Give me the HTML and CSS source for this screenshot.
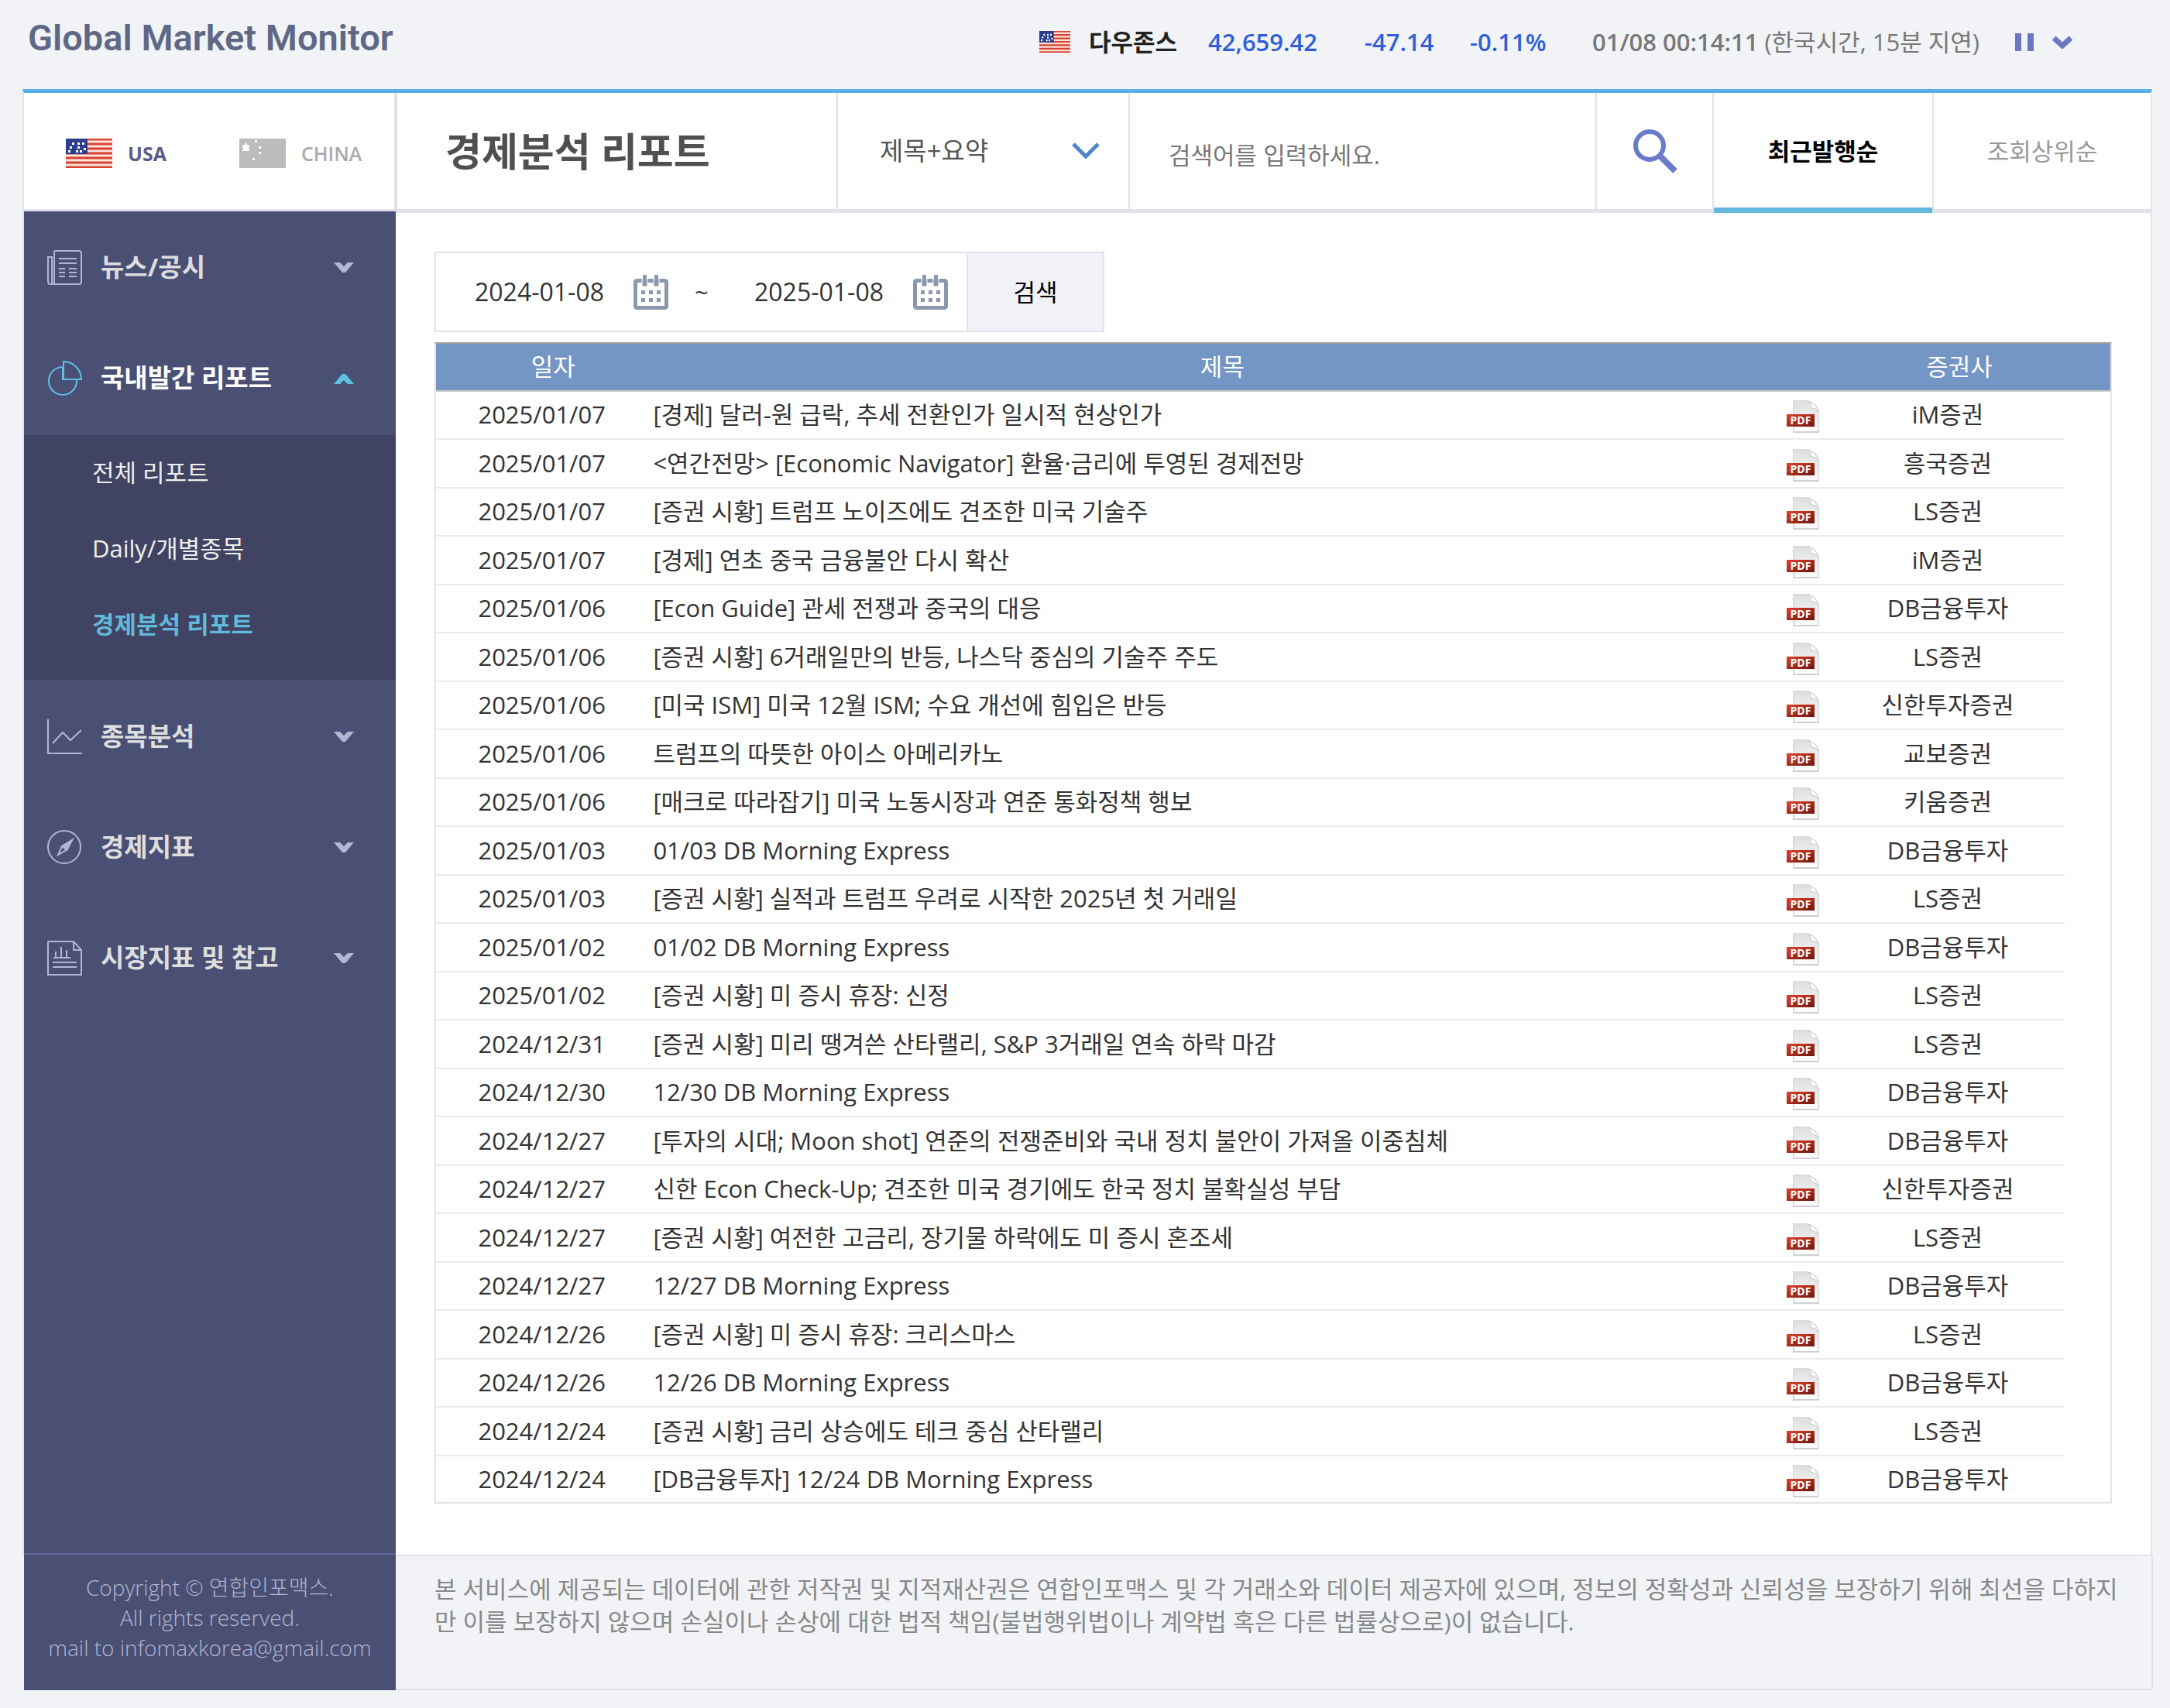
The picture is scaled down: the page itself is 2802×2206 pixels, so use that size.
FILE: index.html
```html
<!DOCTYPE html>
<html lang="ko">
<head>
    <meta charset="UTF-8">
    <meta name="viewport" content="width=device-width, initial-scale=1.0">
    <title>Global Market Monitor</title>
    <link rel="stylesheet" href="styles.css">
</head>
<body>

    <!-- 공통 아이콘 -->
    <svg class="defs" width="0" height="0" aria-hidden="true">
        <linearGradient id="paper" x1="0" y1="0" x2="0" y2="1">
            <stop offset="0" stop-color="#dedede"/>
            <stop offset="1" stop-color="#ffffff"/>
        </linearGradient>
        <linearGradient id="red" x1="0" y1="0" x2="1" y2="1">
            <stop offset="0" stop-color="#e2402a"/>
            <stop offset="1" stop-color="#6e1610"/>
        </linearGradient>
        <symbol id="pdf" viewBox="0 0 42 42">
            <path d="M9 1h18q12 4 14 14v26H9z" fill="url(#paper)" stroke="#dcdcdc" stroke-width="2"/>
            <path d="M8 41h33" stroke="#cfcfcf" stroke-width="2"/>
            <path d="M28 1q4 3 3 9 6-1 10 5-2-10-13-14z" fill="#fff" stroke="#c8c8c8"/>
            <rect x="0" y="18" width="36" height="16" fill="url(#red)"/>
        </symbol>
        <symbol id="down" viewBox="0 0 26 14">
            <path d="M0 0h8l5 5 5-5h8L15 13h-4z" fill="currentColor"/>
        </symbol>
        <symbol id="calendar" viewBox="0 0 45 45">
            <path d="M5 5h35q5 0 5 5v30q0 5-5 5H5q-5 0-5-5V10q0-5 5-5zM5 10v30h35V10z" fill="#8b97ad" fill-rule="evenodd"/>
            <path d="M11 5h7v10h-7zM26 5h7v10h-7z" fill="#8b97ad" stroke="#fff"/>
            <path d="M12 0h5v14h-5zM27 0h5v14h-5zM10 20h5v5h-5zM20 20h5v5h-5zM30 20h5v5h-5zM10 30h5v5h-5zM20 30h5v5h-5zM30 30h5v5h-5z" fill="#8b97ad"/>
        </symbol>
        <symbol id="flag-us" viewBox="0 0 60 38" preserveAspectRatio="none">
            <rect width="60" height="38" fill="#fbe3df"/>
            <path d="M0 1h60M0 7h60M0 13h60M0 19h60M0 25h60M0 31h60M0 37h60" stroke="#d8432f" stroke-width="3"/>
            <rect width="28" height="20" fill="#2c3f8f"/>
            <path d="M8 5h3v3H8zM15 5h3v3h-3zM21 5h3v3h-3zM5 10h3v3H5zM15 10h3v3h-3zM3 15h3v3H3zM13 15h3v3h-3zM18 15h3v3h-3zM23 12h3v3h-3z" fill="#fff"/>
        </symbol>
    </svg>

    <header class="top">
        <h1 class="logo">Global Market Monitor</h1>
        <div class="ticker">
            <svg class="ticker-flag" width="40" height="28"><use href="#flag-us"/></svg>
            <strong class="index-name">다우존스</strong>
            <strong class="value price">42,659.42</strong>
            <strong class="value diff">-47.14</strong>
            <strong class="value rate">-0.11%</strong>
            <span class="time"><b>01/08 00:14:11</b> (한국시간, 15분 지연)</span>
            <button class="icon-btn pause" aria-label="일시정지">
                <svg width="24" height="23"><path d="M0 0h8v23H0zM16 0h8v23h-8z" fill="#6b77c4"/></svg>
            </button>
            <button class="icon-btn more" aria-label="더보기">
                <svg width="26" height="17" viewBox="0 0 26 17"><path d="M2 3l11 10L24 3" fill="none" stroke="#6b77c4" stroke-width="7"/></svg>
            </button>
        </div>
    </header>

    <div class="wrap">
        <aside class="side">
            <div class="country">
                <a href="#" class="on"><svg width="60" height="38"><use href="#flag-us"/></svg>USA</a>
                <a href="#">
                    <svg width="60" height="38"><rect width="60" height="38" fill="#bcbcbc"/><path d="M8 4l2 4 4 1-2 3 1 4H4l1-4-2-3 4-1zM20 2h3v3h-3zM25 10h3v3h-3zM25 17h3v3h-3zM17 25h3v3h-3z" fill="#fff"/></svg>CHINA
                </a>
            </div>
            <nav class="menu">
                <a href="#" class="item">
                    <svg class="ico" viewBox="0 0 45 45"><path d="M9 44V3q0-2 2-2h30q3 0 3 3v37q0 3-3 3H4q-3 0-3-3V9h5v35M15 11h23M15 17h23M15 24h8M15 29h8M15 34h8M28 24h10M28 29h10M28 34h10"/></svg>
                    <span>뉴스/공시</span>
                    <svg class="arrow"><use href="#down"/></svg>
                </a>
                <a href="#" class="item open">
                    <svg class="ico" viewBox="0 0 45 45"><path d="M20 8a18 18 0 1 0 18 18v-2H20zM21 1v23h23A23 23 0 0 0 21 1z"/></svg>
                    <span>국내발간 리포트</span>
                    <svg class="arrow" viewBox="0 0 26 14"><path d="M0 14h8l5-5 5 5h8L15 1h-4z" fill="currentColor"/></svg>
                </a>
                <div class="sub">
                    <a href="#">전체 리포트</a>
                    <a href="#">Daily/개별종목</a>
                    <a href="#" class="on">경제분석 리포트</a>
                </div>
                <a href="#" class="item">
                    <svg class="ico" viewBox="0 0 45 45"><path d="M1 0v44h44M7 31l13-14 10 10 14-13"/></svg>
                    <span>종목분석</span>
                    <svg class="arrow"><use href="#down"/></svg>
                </a>
                <a href="#" class="item">
                    <svg class="ico" viewBox="0 0 45 45"><circle cx="22" cy="22" r="21"/><path d="M32 13L19 21l-5 11 12-7z"/><path d="M32 13L19 21l6 5z" fill="currentColor"/></svg>
                    <span>경제지표</span>
                    <svg class="arrow"><use href="#down"/></svg>
                </a>
                <a href="#" class="item">
                    <svg class="ico" viewBox="0 0 45 45"><path d="M1 1h33l10 11v32H1zM34 1v11h10M8 22h22M11 22v-8M18 22V8M25 22V12M7 28h31M7 34h31"/></svg>
                    <span>시장지표 및 참고</span>
                    <svg class="arrow"><use href="#down"/></svg>
                </a>
            </nav>
        </aside>

        <main class="main">
            <div class="head">
                <h2 class="title">경제분석 리포트</h2>
                <div class="kind">
                    <select aria-label="검색 구분">
                        <option>제목+요약</option>
                    </select>
                    <svg width="36" height="22" viewBox="0 0 36 22"><path d="M2 2l16 16L34 2" fill="none" stroke="#4f86c8" stroke-width="5"/></svg>
                </div>
                <input class="keyword" type="text" aria-label="검색어" placeholder="검색어를 입력하세요.">
                <button class="find" aria-label="검색">
                    <svg width="58" height="58" viewBox="0 0 58 58"><circle cx="22" cy="22" r="18" fill="none" stroke="#6b7bcc" stroke-width="6"/><path d="M35 35l20 20" stroke="#6b7bcc" stroke-width="8"/></svg>
                </button>
                <button class="tab on">최근발행순</button>
                <button class="tab">조회상위순</button>
            </div>

            <div class="content">
                <form class="period">
                    <input type="text" aria-label="시작일" value="2024-01-08">
                    <svg width="45" height="45"><use href="#calendar"/></svg>
                    <span class="tilde">~</span>
                    <input type="text" aria-label="종료일" value="2025-01-08">
                    <svg width="45" height="45"><use href="#calendar"/></svg>
                    <button type="button">검색</button>
                </form>

                <table class="list">
                    <thead>
                        <tr><th>일자</th><th>제목</th><th></th><th>증권사</th></tr>
                    </thead>
                    <tbody>
                        <tr><td>2025/01/07</td><td><a href="#">[경제] 달러-원 급락, 추세 전환인가 일시적 현상인가</a></td><td><svg><use href="#pdf"/><text x="18" y="31">PDF</text></svg></td><td>iM증권</td></tr>
                        <tr><td>2025/01/07</td><td><a href="#">&lt;연간전망&gt; [Economic Navigator] 환율·금리에 투영된 경제전망</a></td><td><svg><use href="#pdf"/><text x="18" y="31">PDF</text></svg></td><td>흥국증권</td></tr>
                        <tr><td>2025/01/07</td><td><a href="#">[증권 시황] 트럼프 노이즈에도 견조한 미국 기술주</a></td><td><svg><use href="#pdf"/><text x="18" y="31">PDF</text></svg></td><td>LS증권</td></tr>
                        <tr><td>2025/01/07</td><td><a href="#">[경제] 연초 중국 금융불안 다시 확산</a></td><td><svg><use href="#pdf"/><text x="18" y="31">PDF</text></svg></td><td>iM증권</td></tr>
                        <tr><td>2025/01/06</td><td><a href="#">[Econ Guide] 관세 전쟁과 중국의 대응</a></td><td><svg><use href="#pdf"/><text x="18" y="31">PDF</text></svg></td><td>DB금융투자</td></tr>
                        <tr><td>2025/01/06</td><td><a href="#">[증권 시황] 6거래일만의 반등, 나스닥 중심의 기술주 주도</a></td><td><svg><use href="#pdf"/><text x="18" y="31">PDF</text></svg></td><td>LS증권</td></tr>
                        <tr><td>2025/01/06</td><td><a href="#">[미국 ISM] 미국 12월 ISM; 수요 개선에 힘입은 반등</a></td><td><svg><use href="#pdf"/><text x="18" y="31">PDF</text></svg></td><td>신한투자증권</td></tr>
                        <tr><td>2025/01/06</td><td><a href="#">트럼프의 따뜻한 아이스 아메리카노</a></td><td><svg><use href="#pdf"/><text x="18" y="31">PDF</text></svg></td><td>교보증권</td></tr>
                        <tr><td>2025/01/06</td><td><a href="#">[매크로 따라잡기] 미국 노동시장과 연준 통화정책 행보</a></td><td><svg><use href="#pdf"/><text x="18" y="31">PDF</text></svg></td><td>키움증권</td></tr>
                        <tr><td>2025/01/03</td><td><a href="#">01/03 DB Morning Express</a></td><td><svg><use href="#pdf"/><text x="18" y="31">PDF</text></svg></td><td>DB금융투자</td></tr>
                        <tr><td>2025/01/03</td><td><a href="#">[증권 시황] 실적과 트럼프 우려로 시작한 2025년 첫 거래일</a></td><td><svg><use href="#pdf"/><text x="18" y="31">PDF</text></svg></td><td>LS증권</td></tr>
                        <tr><td>2025/01/02</td><td><a href="#">01/02 DB Morning Express</a></td><td><svg><use href="#pdf"/><text x="18" y="31">PDF</text></svg></td><td>DB금융투자</td></tr>
                        <tr><td>2025/01/02</td><td><a href="#">[증권 시황] 미 증시 휴장: 신정</a></td><td><svg><use href="#pdf"/><text x="18" y="31">PDF</text></svg></td><td>LS증권</td></tr>
                        <tr><td>2024/12/31</td><td><a href="#">[증권 시황] 미리 땡겨쓴 산타랠리, S&amp;P 3거래일 연속 하락 마감</a></td><td><svg><use href="#pdf"/><text x="18" y="31">PDF</text></svg></td><td>LS증권</td></tr>
                        <tr><td>2024/12/30</td><td><a href="#">12/30 DB Morning Express</a></td><td><svg><use href="#pdf"/><text x="18" y="31">PDF</text></svg></td><td>DB금융투자</td></tr>
                        <tr><td>2024/12/27</td><td><a href="#">[투자의 시대; Moon shot] 연준의 전쟁준비와 국내 정치 불안이 가져올 이중침체</a></td><td><svg><use href="#pdf"/><text x="18" y="31">PDF</text></svg></td><td>DB금융투자</td></tr>
                        <tr><td>2024/12/27</td><td><a href="#">신한 Econ Check-Up; 견조한 미국 경기에도 한국 정치 불확실성 부담</a></td><td><svg><use href="#pdf"/><text x="18" y="31">PDF</text></svg></td><td>신한투자증권</td></tr>
                        <tr><td>2024/12/27</td><td><a href="#">[증권 시황] 여전한 고금리, 장기물 하락에도 미 증시 혼조세</a></td><td><svg><use href="#pdf"/><text x="18" y="31">PDF</text></svg></td><td>LS증권</td></tr>
                        <tr><td>2024/12/27</td><td><a href="#">12/27 DB Morning Express</a></td><td><svg><use href="#pdf"/><text x="18" y="31">PDF</text></svg></td><td>DB금융투자</td></tr>
                        <tr><td>2024/12/26</td><td><a href="#">[증권 시황] 미 증시 휴장: 크리스마스</a></td><td><svg><use href="#pdf"/><text x="18" y="31">PDF</text></svg></td><td>LS증권</td></tr>
                        <tr><td>2024/12/26</td><td><a href="#">12/26 DB Morning Express</a></td><td><svg><use href="#pdf"/><text x="18" y="31">PDF</text></svg></td><td>DB금융투자</td></tr>
                        <tr><td>2024/12/24</td><td><a href="#">[증권 시황] 금리 상승에도 테크 중심 산타랠리</a></td><td><svg><use href="#pdf"/><text x="18" y="31">PDF</text></svg></td><td>LS증권</td></tr>
                        <tr><td>2024/12/24</td><td><a href="#">[DB금융투자] 12/24 DB Morning Express</a></td><td><svg><use href="#pdf"/><text x="18" y="31">PDF</text></svg></td><td>DB금융투자</td></tr>
                    </tbody>
                </table>
            </div>
        </main>
    </div>

    <footer class="foot">
        <p class="copy">Copyright © 연합인포맥스.<br>All rights reserved.<br>mail to infomaxkorea@gmail.com</p>
        <p class="notice">본 서비스에 제공되는 데이터에 관한 저작권 및 지적재산권은 연합인포맥스 및 각 거래소와 데이터 제공자에 있으며, 정보의 정확성과 신뢰성을 보장하기 위해 최선을 다하지<br>만 이를 보장하지 않으며 손실이나 손상에 대한 법적 책임(불법행위법이나 계약법 혹은 다른 법률상으로)이 없습니다.</p>
    </footer>

</body>
</html>
```
FILE: styles.css
```css
* {
    box-sizing: border-box;
}

body {
    margin: 0;
    background: #f1f3f7;
    color: #333;
    font-family: "Open Sans", "Noto Sans CJK KR", sans-serif;
    font-size: 31px;
    line-height: 42px;
}

a {
    color: inherit;
    text-decoration: none;
}

button, input, select {
    margin: 0;
    padding: 0;
    border: 0;
    border-radius: 0;
    background: none;
    color: inherit;
    font: inherit;
}

button {
    cursor: pointer;
}

svg {
    display: block;
    flex: none;
}

.defs {
    position: absolute;
}

/* 상단 */
.top {
    display: flex;
    justify-content: space-between;
    height: 115px;
    padding: 0 126px 0 36px;
}

.logo {
    margin: 0;
    padding-top: 19px;
    color: #5f6884;
    font-family: Roboto, sans-serif;
    font-size: 47px;
    font-weight: 600;
    line-height: 60px;
}

.ticker {
    display: flex;
    align-items: center;
    height: 108px;
    white-space: nowrap;
}

.ticker-flag {
    margin-right: 24px;
}

.index-name {
    width: 154px;
    color: #222;
}

.value {
    color: #2f5fd8;
    font-weight: 600;
}

.price {
    width: 202px;
}

.diff {
    width: 136px;
}

.rate {
    width: 158px;
}

.time {
    width: 546px;
    color: #777;
}

.time b {
    font-weight: 600;
}

.pause {
    margin-right: 24px;
}

/* 본문 틀 */
.wrap {
    display: flex;
    margin: 0 23px 0 29px;
    border: 2px solid #e2e2ec;
    border-top: 5px solid #5ab0e6;
    border-bottom: 0;
    background: #fff;
}

.side {
    display: flex;
    flex-direction: column;
    flex: none;
    width: 480px;
}

.country {
    display: flex;
    gap: 94px;
    height: 153px;
    padding: 6px 0 0 54px;
    border-right: 2px solid #e2e2ec;
    border-bottom: 3px solid #e2e2ec;
    color: #aaa;
    font-size: 25px;
}

.country a {
    display: flex;
    align-items: center;
    gap: 20px;
    font-weight: 600;
}

.country .on {
    color: #5a5c85;
    font-weight: bold;
}

.menu {
    flex: 1;
    padding-top: 1px;
    border-bottom: 2px solid #60689e;
    background: #4a4f74;
}

.item {
    display: flex;
    align-items: center;
    height: 143px;
    padding: 0 54px 0 30px;
    color: #b3b5d2;
}

.item span {
    flex: 1;
    margin-left: 24px;
    padding-bottom: 2px;
    color: #ddd;
    font-size: 33px;
    font-weight: bold;
}

.item.open {
    color: #5fc0e6;
}

.item.open span {
    color: #fff;
}

.ico {
    width: 45px;
    height: 45px;
    fill: none;
    stroke: currentColor;
    stroke-width: 2;
}

.arrow {
    width: 26px;
    height: 14px;
}

.sub {
    height: 320px;
    padding-left: 88px;
    border: solid #4a4f74;
    border-width: 2px 0;
    background: #404362;
    color: #eee;
}

.sub a {
    display: block;
    height: 98px;
    line-height: 96px;
}

.sub .on {
    color: #63b9db;
    font-weight: bold;
}

.main {
    flex: 1;
    min-width: 0;
}

.head {
    display: grid;
    grid-template-columns: 569px 377px 1fr 151px 284px 280px;
    height: 155px;
    border-left: 2px solid #e2e2ec;
    border-bottom: 5px solid #e2e2ec;
}

.head > * {
    border-right: 2px solid #e2e2ec;
}

.title {
    margin: 0;
    padding-left: 62px;
    color: #505050;
    font-size: 51px;
    line-height: 150px;
}

.kind {
    display: grid;
    align-items: center;
}

.kind select, .kind svg {
    grid-area: 1 / 1;
}

.kind select {
    width: 100%;
    height: 150px;
    padding-left: 54px;
    appearance: none;
    color: #555;
    font-size: 33px;
}

.kind svg {
    justify-self: end;
    margin-right: 37px;
    pointer-events: none;
}

.keyword {
    min-width: 0;
    padding: 10px 0 0 50px;
}

.keyword::placeholder {
    color: #777;
    opacity: 1;
}

.find {
    display: grid;
    place-items: center;
}

.tab {
    position: relative;
    color: #999;
}

.tab:last-child {
    border-right: 0;
}

.tab.on {
    color: #000;
    font-weight: bold;
}

.tab.on::after {
    content: "";
    position: absolute;
    left: 0;
    right: 0;
    bottom: -5px;
    height: 7px;
    background: #63b9db;
}

.content {
    padding: 50px 50px 66px;
}

/* 기간 검색 */
.period {
    display: flex;
    align-items: center;
    width: 865px;
    height: 104px;
    margin-bottom: 13px;
    border: 2px solid #e2e2ec;
}

.period input {
    width: 204px;
    margin-left: 50px;
    font-size: 32px;
}

.period svg {
    margin-left: 1px;
}

.tilde {
    width: 61px;
    padding-left: 34px;
}

.period button {
    flex: 1;
    align-self: stretch;
    margin-left: 24px;
    border-left: 2px solid #e2e2ec;
    background: #f1f2f7;
    color: #000;
}

/* 리포트 목록 */
.list {
    display: block;
    border: 2px solid #e2e2ec;
    border-top-color: #a0a0a0;
}

.list thead, .list tbody {
    display: block;
}

.list tr {
    display: grid;
    grid-template-columns: 13% 1fr 57px 302px;
    align-items: center;
    height: 62px;
    border-bottom: 2px solid #ebebeb;
}

.list thead tr {
    grid-template-columns: 14% 1fr 44px 390px;
    border-bottom-color: #c8c8c8;
    background: #7496c4;
    color: #fff;
}

.list tbody {
    padding-right: 59px;
}

.list tbody tr:nth-child(even) {
    height: 63px;
}

.list tbody tr:last-child {
    height: 59px;
    border-bottom: 0;
}

.list th, .list td {
    padding: 0 0 2px;
    font-weight: normal;
    text-align: center;
    white-space: nowrap;
}

.list td:nth-child(2) {
    padding-left: 7px;
    text-align: left;
}

.list td:nth-child(3) {
    padding: 4px 0 0;
}

.list td svg {
    width: 42px;
    height: 42px;
}

.list text {
    font-size: 14px;
    font-weight: bold;
    fill: #fff;
    text-anchor: middle;
}

/* 하단 */
.foot {
    display: flex;
    margin: 0 22px 23px 31px;
}

.copy, .notice {
    margin: 0;
}

.copy {
    flex: none;
    width: 480px;
    height: 175px;
    padding-top: 23px;
    background: #4a4f74;
    color: #b3b5d2;
    font-size: 28px;
    font-weight: 300;
    line-height: 39px;
    text-align: center;
}

.notice {
    flex: 1;
    padding: 21px 0 0 50px;
    border: 2px solid #e2e2ec;
    border-left: 0;
    color: #888;
    white-space: nowrap;
}
```
